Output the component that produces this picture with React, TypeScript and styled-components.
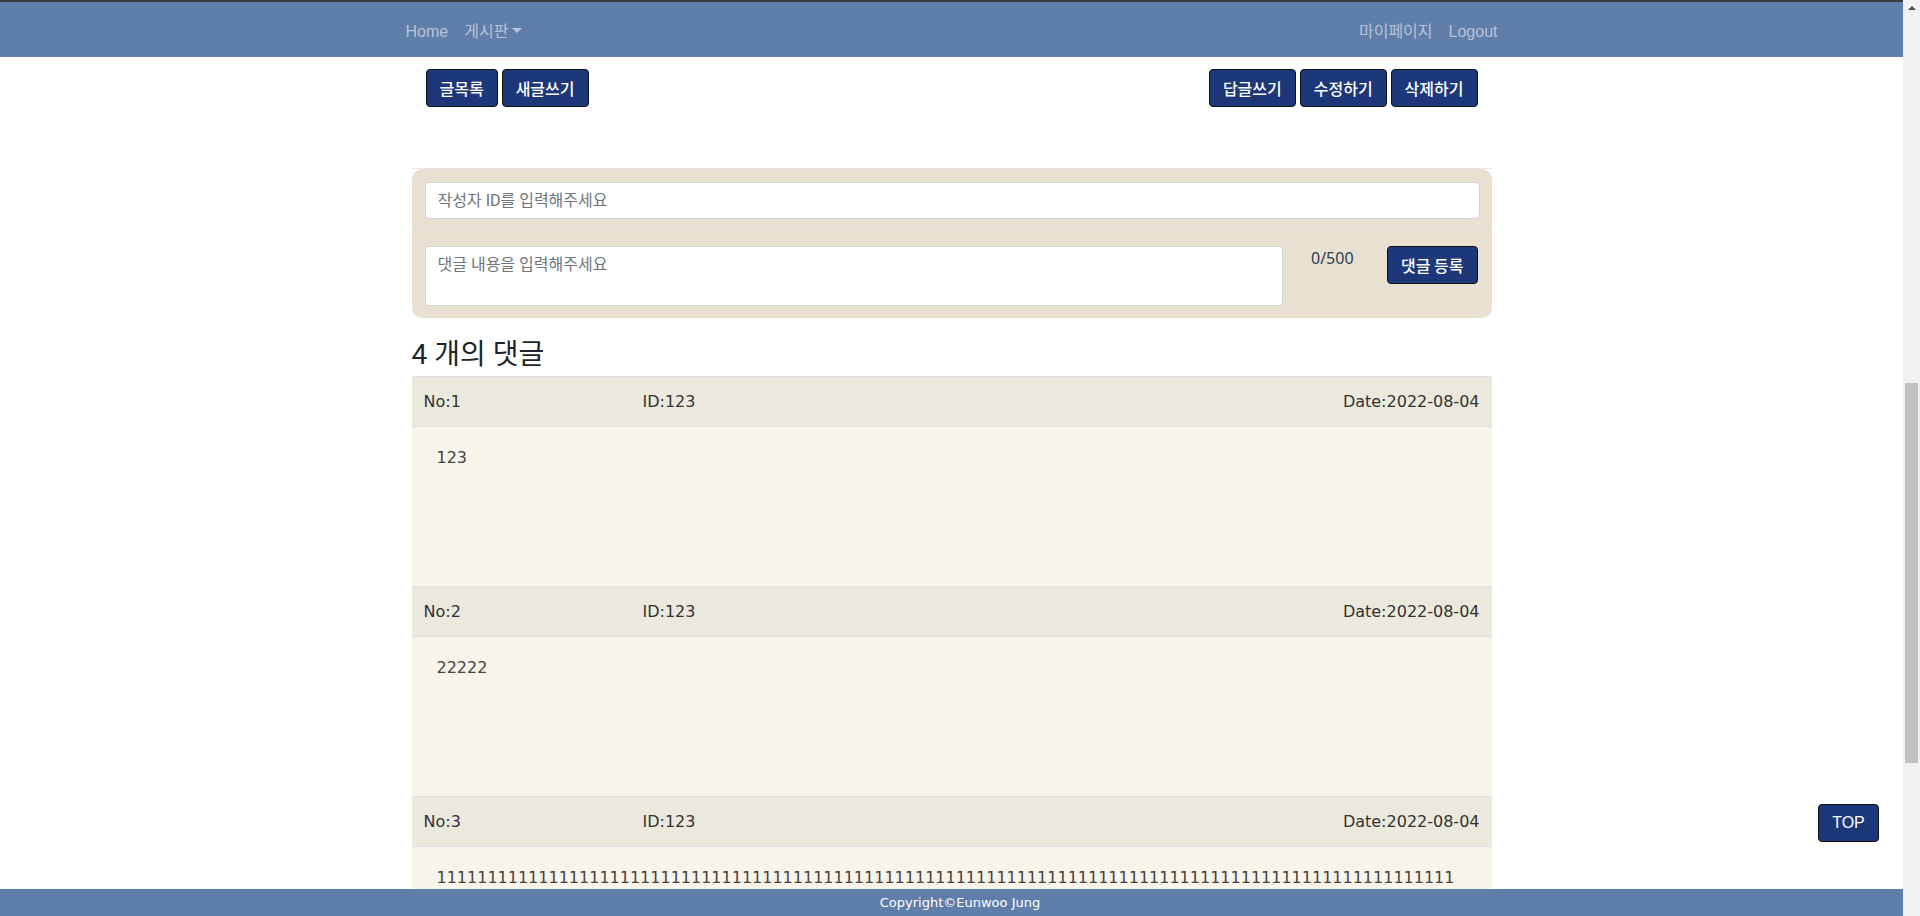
import styled, { createGlobalStyle } from 'styled-components'

const comments = [
  { no: 1, id: '123', date: '2022-08-04', text: '123' },
  { no: 2, id: '123', date: '2022-08-04', text: '22222' },
  { no: 3, id: '123', date: '2022-08-04', text: '1'.repeat(260) },
  { no: 4, id: '123', date: '2022-08-04', text: '4444' },
]

export default function App() {
  return (
    <Screen>
      <GlobalStyle />
      <Page>
        <NavBar>
          <NavInner>
            <NavGroup>
              <NavLink>Home</NavLink>
              <NavLink $caret>게시판</NavLink>
            </NavGroup>
            <NavGroup>
              <NavLink>마이페이지</NavLink>
              <NavLink>Logout</NavLink>
            </NavGroup>
          </NavInner>
        </NavBar>

        <Main>
          <ButtonRow>
            <div>
              <Button>글목록</Button> <Button>새글쓰기</Button>
            </div>
            <div>
              <Button>답글쓰기</Button> <Button>수정하기</Button> <Button>삭제하기</Button>
            </div>
          </ButtonRow>

          <FormWrap>
            <CommentForm>
              <Input placeholder='작성자 ID를 입력해주세요' />
              <Divider />
              <FormRow>
                <TextArea placeholder='댓글 내용을 입력해주세요' />
                <Counter>0/500</Counter>
                <Button>댓글 등록</Button>
              </FormRow>
            </CommentForm>
          </FormWrap>

          <CountTitle>4 개의 댓글</CountTitle>

          {comments.map((c) => (
            <Comment key={c.no}>
              <CommentHead>
                <NoCol>No:{c.no}</NoCol>
                <IdCol>ID:{c.id}</IdCol>
                <span>Date:{c.date}</span>
              </CommentHead>
              <CommentBody>{c.text}</CommentBody>
            </Comment>
          ))}
        </Main>

        <TopButton>TOP</TopButton>

        <Footer>Copyright©Eunwoo Jung</Footer>
      </Page>

      <ScrollTrack>
        <ScrollThumb />
      </ScrollTrack>
    </Screen>
  )
}

const GlobalStyle = createGlobalStyle`
  body {
    margin: 0;
    overflow: hidden;
    background: #fff;
    color: #212529;
    font-family: Roboto, "Noto Sans CJK KR", sans-serif;
  }
  * { box-sizing: border-box; }
`

const Screen = styled.div`
  display: flex;
  height: 100vh;
`

const Page = styled.div`
  flex: 1;
  min-width: 0;
  overflow-y: auto;
  scrollbar-width: none;

  &::-webkit-scrollbar { display: none; }
`

const ScrollTrack = styled.div`
  width: 17px;
  flex-shrink: 0;
  padding-top: 17px;
  position: relative;
  background: #f1f1f1;

  &::before {
    content: '';
    position: absolute;
    top: 6px;
    left: 5px;
    border-bottom: 4px solid #505050;
    border-left: 4px solid transparent;
    border-right: 4px solid transparent;
  }
`

const ScrollThumb = styled.div`
  height: 380px;
  margin: 366px 2px 0;
  background: #c1c1c1;
`

const NavBar = styled.header`
  position: sticky;
  top: 0;
  z-index: 10;
  height: 57px;
  border-top: 2px solid #3b3b3b;
  background: #5f7ea9;
`

const NavInner = styled.nav`
  max-width: 1140px;
  height: 100%;
  margin: 0 auto;
  padding: 4px 16px 0;
  display: flex;
  justify-content: space-between;
  align-items: center;
`

const NavGroup = styled.div`
  display: flex;
`

const NavLink = styled.a<{ $caret?: boolean }>`
  padding: 8px;
  color: rgba(255, 255, 255, 0.55);
  font-family: "Liberation Sans", "Noto Sans CJK KR", sans-serif;
  font-size: 16px;
  line-height: 24px;
  cursor: pointer;

  &::after {
    content: '';
    display: ${(p) => (p.$caret ? 'inline-block' : 'none')};
    margin-left: 4px;
    vertical-align: 4px;
    border-top: 5px solid rgba(255, 255, 255, 0.55);
    border-left: 5px solid transparent;
    border-right: 5px solid transparent;
  }
`

const Main = styled.main`
  max-width: 1080px;
  margin: 0 auto;
`

const ButtonRow = styled.div`
  display: flex;
  justify-content: space-between;
  padding: 12px 14px 0;
`

const Button = styled.button`
  padding: 6px 13px;
  border: 1px solid #111;
  border-radius: 4px;
  background: #1d3879;
  color: #fff;
  font-family: "Noto Sans CJK KR", sans-serif;
  font-size: 16px;
  font-weight: 500;
  line-height: 24px;
  cursor: pointer;
`

const FormWrap = styled.div`
  margin-top: 61px;
  border-top: 1px solid #e6e6e6;
`

const CommentForm = styled.form`
  padding: 13px 12px 12px 13px;
  border-radius: 10px;
  background: #e8e1d2;
`

const Input = styled.input`
  display: block;
  width: 100%;
  height: 37px;
  padding: 6px 12px;
  border: 1px solid #ced4da;
  border-radius: 4px;
  background: #fff;
  font-family: Roboto, "Noto Sans CJK KR", sans-serif;
  font-size: 16px;

  &::placeholder { color: #6c757d; }
`

const Divider = styled.hr`
  margin: 12px -12px 14px -13px;
  border: 0;
  border-top: 1px solid #dedcd6;
`

const FormRow = styled.div`
  display: flex;
  align-items: flex-start;
  padding-right: 2px;
`

const TextArea = styled.textarea`
  flex: 1;
  height: 60px;
  padding: 6px 12px;
  border: 1px solid #ced4da;
  border-radius: 4px;
  resize: none;
  font-family: Roboto, "Noto Sans CJK KR", sans-serif;
  font-size: 16px;
  line-height: 24px;

  &::placeholder { color: #6c757d; }
`

const Counter = styled.span`
  width: 48px;
  margin: 0 28px;
  color: #2c3e50;
  font-family: "Noto Sans", sans-serif;
  font-size: 16px;
  line-height: 24px;
`

const CountTitle = styled.h3`
  margin: 20px 0 4px;
  font-size: 28px;
  font-weight: 400;
  line-height: 1.2;
`

const Comment = styled.section`
  border-top: 1px solid #dde0e6;
`

const CommentHead = styled.div`
  display: flex;
  align-items: center;
  height: 50px;
  padding: 0 12px;
  border-bottom: 1px solid #dde0e6;
  background: #ebe8de;
  color: #333;
  font-family: "DejaVu Sans", sans-serif;
  font-size: 16px;
`

const NoCol = styled.span`
  width: 219px;
`

const IdCol = styled.span`
  flex: 1;
`

const CommentBody = styled.div`
  min-height: 159px;
  padding: 19px 32px 19px 25px;
  background: #f8f4ea;
  color: #444;
  font-family: "DejaVu Sans", sans-serif;
  font-size: 16px;
  line-height: 24px;
  word-break: break-all;
`

const TopButton = styled.button`
  position: fixed;
  right: 41px;
  bottom: 74px;
  width: 61px;
  height: 38px;
  border: 1px solid #111;
  border-radius: 4px;
  background: #1d3879;
  color: #fff;
  font-family: "Liberation Sans", Arial, sans-serif;
  font-size: 16px;
  cursor: pointer;
`

const Footer = styled.footer`
  position: sticky;
  bottom: 0;
  height: 27px;
  display: flex;
  justify-content: center;
  align-items: center;
  padding-left: 17px;
  background: #5f7ea9;
  color: #fff;
  font-family: "DejaVu Sans", sans-serif;
  font-size: 13px;
`
